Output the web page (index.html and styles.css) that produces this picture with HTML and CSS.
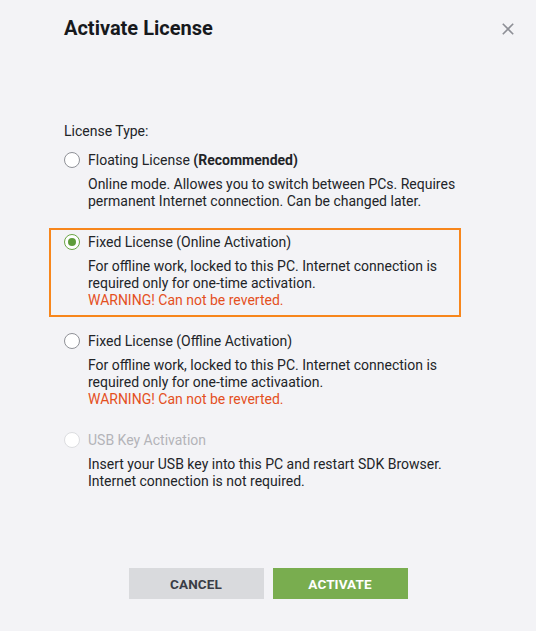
FILE: index.html
```html
<!DOCTYPE html>
<html>
<head>
<meta charset="utf-8">
<link rel="stylesheet" href="styles.css">
</head>
<body>
<div class="dialog">
  <div class="header">
    <h1 class="title">Activate License</h1>
    <button class="close" aria-label="Close">
      <svg width="12" height="12" viewBox="0 0 12 12"><path d="M0.8 0.8L11.2 11.2M11.2 0.8L0.8 11.2" stroke="#8d8f96" stroke-width="1.6" fill="none"/></svg>
    </button>
  </div>
  <div class="content">
    <div class="type-label">License Type:</div>
    <div class="options">
      <div class="option">
        <div class="option-head"><span class="radio"></span><span>Floating License <b>(Recommended)</b></span></div>
        <div class="desc">Online mode. Allowes you to switch between PCs. Requires<br>permanent Internet connection. Can be changed later.</div>
      </div>
      <div class="option selected">
        <div class="option-head"><span class="radio checked"></span><span>Fixed License (Online Activation)</span></div>
        <div class="desc">For offline work, locked to this PC. Internet connection is<br>required only for one-time activation.<br><span class="warn">WARNING! Can not be reverted.</span></div>
      </div>
      <div class="option">
        <div class="option-head"><span class="radio"></span><span>Fixed License (Offline Activation)</span></div>
        <div class="desc">For offline work, locked to this PC. Internet connection is<br>required only for one-time activaation.<br><span class="warn">WARNING! Can not be reverted.</span></div>
      </div>
      <div class="option disabled">
        <div class="option-head"><span class="radio"></span><span>USB Key Activation</span></div>
        <div class="desc">Insert your USB key into this PC and restart SDK Browser.<br>Internet connection is not required.</div>
      </div>
    </div>
  </div>
  <div class="actions">
    <button class="btn cancel">CANCEL</button>
    <button class="btn activate">ACTIVATE</button>
  </div>
</div>
</body>
</html>
```
FILE: styles.css
```css
html, body {
  margin: 0;
  padding: 0;
  background: #f3f3f6;
}
body {
  font-family: Roboto, "Liberation Sans", sans-serif;
  color: #222428;
  width: 536px;
  height: 631px;
  overflow: hidden;
}
.dialog {
  display: flex;
  flex-direction: column;
}
.header {
  display: flex;
  align-items: center;
  justify-content: space-between;
  padding: 16px 21px 0 64px;
  height: 24px;
}
.title {
  margin: 0;
  font-size: 20px;
  line-height: 24px;
  font-weight: 700;
  color: #17191d;
}
.close {
  border: 0;
  background: none;
  padding: 0;
  width: 14px;
  height: 14px;
  display: flex;
  align-items: center;
  justify-content: center;
  margin-top: 1px;
}
.content {
  padding: 83px 0 0 49px;
  width: 412px;
}
.type-label {
  font-size: 14px;
  line-height: 16px;
  padding-left: 15px;
  margin-bottom: 7px;
}
.options {
  display: flex;
  flex-direction: column;
  gap: 10px;
}
.option {
  border: 2px solid transparent;
  padding: 4px 13px 6px 13px;
  font-size: 14px;
  line-height: 17px;
}
.option.selected {
  border-color: #f7861c;
}
.option-head {
  display: flex;
  align-items: center;
  gap: 8px;
  height: 16px;
}
.option-head b {
  font-weight: 700;
}
.radio {
  box-sizing: border-box;
  width: 16px;
  height: 16px;
  border-radius: 50%;
  border: 1px solid #8f9197;
  background: #fff;
  display: flex;
  align-items: center;
  justify-content: center;
  flex: none;
}
.radio.checked {
  border-color: #6aa544;
}
.radio.checked::after {
  content: "";
  width: 8px;
  height: 8px;
  border-radius: 50%;
  background: #5e9c3a;
}
.disabled .radio {
  border-color: #dcdde0;
}
.disabled .option-head {
  color: #b3b4b9;
}
.desc {
  padding-left: 24px;
  margin-top: 8px;
  white-space: nowrap;
}
.warn {
  color: #e4501e;
}
.actions {
  display: flex;
  justify-content: center;
  gap: 9px;
  margin-top: 70px;
}
.btn {
  width: 135px;
  height: 31px;
  border: 0;
  font-family: Roboto, "Liberation Sans", sans-serif;
  font-size: 13.5px;
  font-weight: 700;
  letter-spacing: 0.1px;
}
.cancel {
  background: #d9dadd;
  color: #3a3d46;
}
.activate {
  background: #79ad4f;
  color: #fff;
}
```
